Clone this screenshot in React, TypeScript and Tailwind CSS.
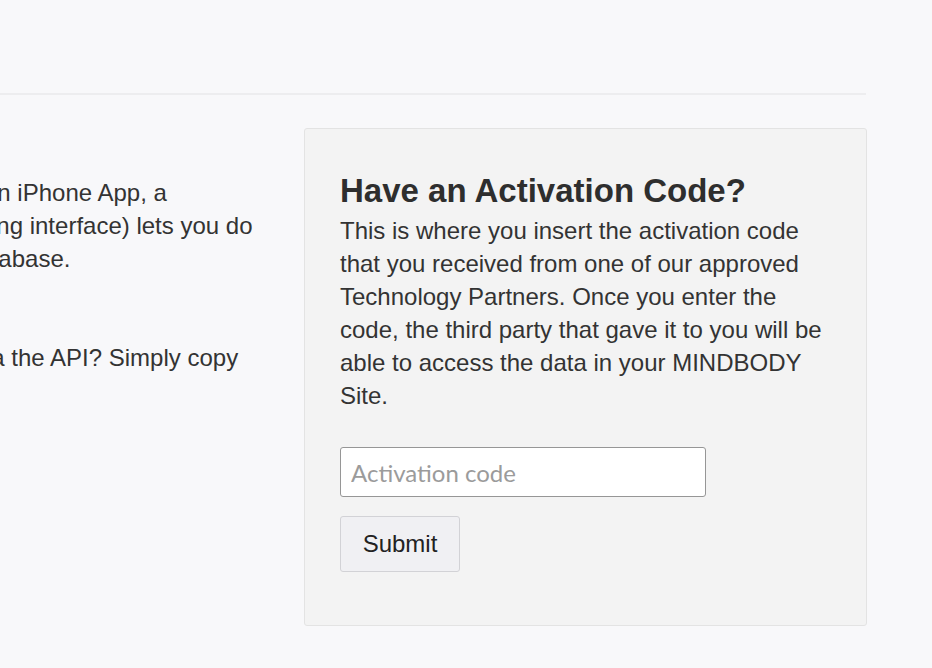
import React from "react";

export default function App() {
  return (
    <div className="w-[932px] h-[668px] overflow-hidden bg-[#f8f8fa] text-[#333333]" style={{ fontFamily: '"Liberation Sans", Arial, sans-serif' }}>
      <div className="h-[93px]" />
      <div className="w-[866px] h-[2px] bg-[#ededef]" />
      <div className="flex pt-[33px]">
        <div className="w-[304px] shrink-0 overflow-hidden pt-[48px] text-[24px] leading-[33px]">
          <div className="whitespace-nowrap ml-[-16px]">an iPhone App, a</div>
          <div className="whitespace-nowrap ml-[-29px]">ming interface) lets you do</div>
          <div className="whitespace-nowrap ml-[-35px]">database.</div>
          <div className="h-[66px]" />
          <div className="whitespace-nowrap ml-[-26px]">via the API? Simply copy</div>
        </div>
        <div className="w-[563px] h-[498px] shrink-0 bg-[#f3f3f3] border border-[#e3e3e3] rounded-[3px] pl-[35px] pr-[20px] pt-[45px]">
          <h2 className="text-[33px] leading-[33px] font-bold text-[#2e2e2e] whitespace-nowrap">Have an Activation Code?</h2>
          <p className="text-[24px] leading-[33px] mt-[7px] whitespace-nowrap">
            This is where you insert the activation code<br />
            that you received from one of our approved<br />
            Technology Partners. Once you enter the<br />
            code, the third party that gave it to you will be<br />
            able to access the data in your MINDBODY<br />
            Site.
          </p>
          <input
            type="text"
            placeholder="Activation code"
            className="block mt-[35px] w-[366px] h-[50px] bg-white border border-[#969696] rounded-[3px] px-[10px] text-[24px] placeholder:text-[#9b9b9b] outline-none"
            style={{ fontFamily: 'Lato, "Open Sans", sans-serif' }}
          />
          <button className="block mt-[19px] w-[120px] h-[56px] bg-[#f0f0f3] border border-[#d2d2d6] rounded-[3px] text-[24px] text-[#222]">
            Submit
          </button>
        </div>
      </div>
    </div>
  );
}
